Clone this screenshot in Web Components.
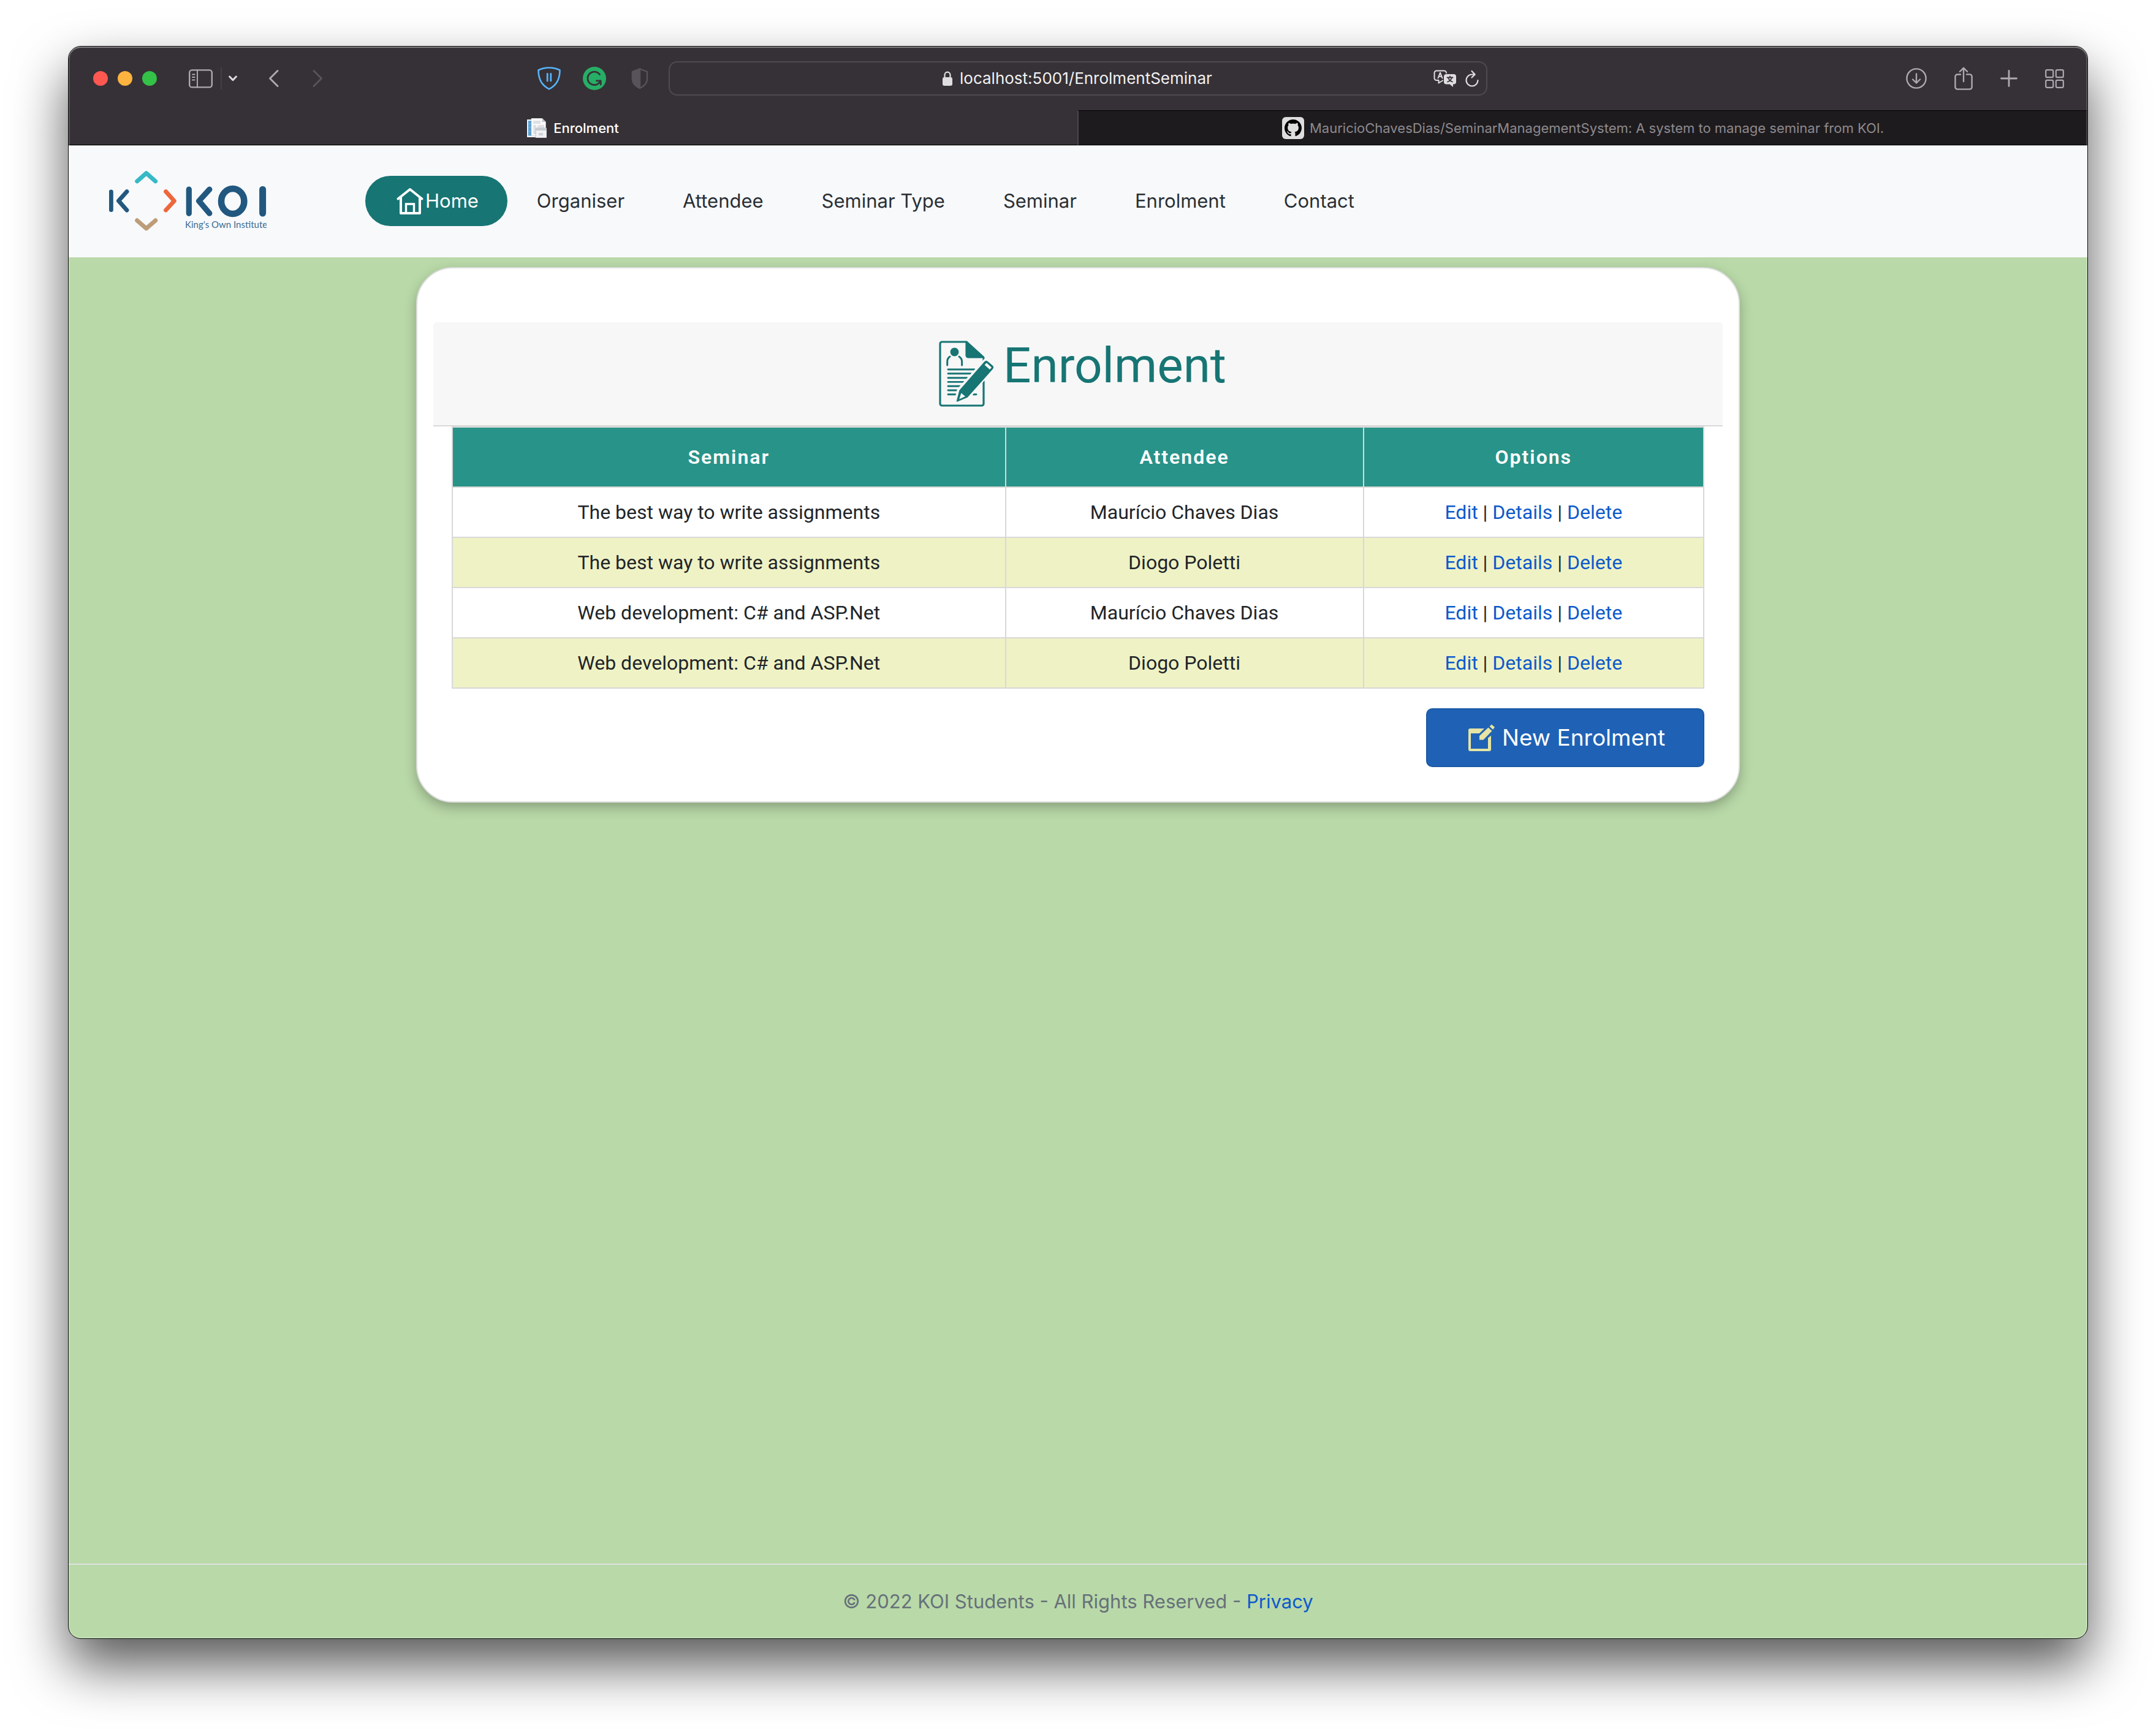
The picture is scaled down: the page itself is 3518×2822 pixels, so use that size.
<!DOCTYPE html>
<html lang="en">
<head>
<meta charset="utf-8">
<title>Enrolment</title>
<style>
html,body{margin:0;height:100%}
body{background:#fff;box-sizing:border-box;padding:75px 111px 147px;display:flex;font-family:Inter,"Liberation Sans",sans-serif}
</style>
</head>
<body>
<browser-window>
  <browser-toolbar slot="chrome" address="localhost:5001/EnrolmentSeminar"></browser-toolbar>
  <browser-tabs slot="chrome"></browser-tabs>
  <site-header></site-header>
  <site-main>
    <enrolment-card heading="Enrolment">
      <enrolment-table></enrolment-table>
      <new-button slot="action">New Enrolment</new-button>
    </enrolment-card>
  </site-main>
  <site-footer></site-footer>
</browser-window>
<script>
const define = (name, html, ready) => customElements.define(name, class extends HTMLElement {
  constructor() { super(); this.attachShadow({ mode: 'open' }).innerHTML = html; }
  connectedCallback() { if (ready) ready(this.shadowRoot, this); }
});

define('browser-window', `
<style>
:host{flex:1;display:flex;flex-direction:column;position:relative;border:1px solid #0b0b0b;border-radius:21px;overflow:hidden;background:#b9d9a8;box-shadow:0 44px 88px rgba(0,0,0,.66)}
:host::after{content:"";position:absolute;inset:0;border-radius:20px;pointer-events:none;box-shadow:inset 0 2px 0 rgba(255,255,255,.25),inset 0 0 0 2px rgba(255,255,255,.16)}
</style>
<slot name="chrome"></slot><slot></slot>`);

define('browser-toolbar', `
<style>
:host{display:grid;grid-template-columns:1fr auto 1fr;align-items:center;height:104px;padding:0 38px;box-sizing:border-box;color:#aea9b0;background:#363136}
button{all:unset;display:flex;cursor:pointer}
svg{display:block;fill:none;stroke:currentColor;stroke-linecap:round;stroke-linejoin:round}
.lights{display:flex;gap:16px;margin-left:2px}
.lights button{width:24px;height:24px;border-radius:50%}
.red{background:#fe5850}.amber{background:#fdb33f}.green{background:#33c148}
.side{margin-left:52px;display:flex;align-items:center}
.side i{width:2px;height:36px;background:#454046;margin:0 11px 0 13px}
.navs{display:flex;gap:51px;margin-left:50px}
.dim{color:#58535a}
.left,.right{display:flex;align-items:center}
.ext{display:flex;align-items:center;gap:36px;margin-left:auto;margin-right:28px}
.right{justify-content:flex-end;gap:45px}
form{width:1336px;height:56px;box-sizing:border-box;border:2px solid #4e4a50;border-radius:14px;display:grid;grid-template-columns:1fr auto 1fr;align-items:center;color:#dfdddf;padding:0 12px}
label{grid-column:2;display:flex;align-items:center;gap:12px}
input{all:unset;width:414px;color:#f1f0f1;font:400 26px/32px Inter,"Liberation Sans",sans-serif}
.tools{display:flex;gap:14px;align-items:center;justify-content:flex-end}
</style>
<div class="left">
<div class="lights"><button class="red" aria-label="Close"></button><button class="amber" aria-label="Minimise"></button><button class="green" aria-label="Zoom"></button></div>
<div class="side">
<button aria-label="Sidebar"><svg width="39" height="31" viewBox="0 0 39 31" stroke-width="2.4"><rect x="1.2" y="1.4" width="36.6" height="28" rx="4"/><path d="M14 1.4v28M6 8.500h3.600M6 13h3.600M6 17.500h3.600" stroke-width="2"/></svg></button>
<i></i>
<button aria-label="Tab groups"><svg width="14" height="10" viewBox="0 0 14 10" stroke-width="3" style="stroke:#dcdadd"><path d="M1.600 2 7 7.600 12.400 2"/></svg></button>
</div>
<div class="navs">
<button aria-label="Back"><svg width="20" height="30" viewBox="0 0 20 30" stroke-width="3"><path d="M16 2.500 3.500 15 16 27.500"/></svg></button>
<button aria-label="Forward" class="dim"><svg width="20" height="30" viewBox="0 0 20 30" stroke-width="3"><path d="M4 2.500 16.500 15 4 27.500"/></svg></button>
</div>
<div class="ext">
<button aria-label="Ad blocker"><svg width="38" height="38" viewBox="0 0 38 38" style="stroke:#56b4fb" stroke-width="2.600"><path d="M19 1.500c6 0 12 1.200 17.500 4C36.500 19 32 30 19 36.300 6 30 1.500 19 1.500 5.500 7 2.700 13 1.500 19 1.500z"/><path d="M16.200 11.500v11.500M21.800 11.500v11.500" stroke-width="2.800"/></svg></button>
<button aria-label="Writing assistant"><svg width="38" height="38" viewBox="0 0 38 38" style="stroke:#363136" stroke-width="2.800"><circle cx="19" cy="19" r="19" fill="#27ae66" stroke="none"/><path d="M27.500 12.500A10.800 10.800 0 1 0 28.500 23.500M22.500 22.800h6.700v6.200"/></svg></button>
<button aria-label="Privacy report" class="dim"><svg width="38" height="38" viewBox="0 0 38 38" stroke-width="2.400"><path d="M19 3.500l12 4.500v12c0 7-6 12-12 15C13 32 7 27 7 20V8z"/><path d="M19 3.500L7 8v12c0 7 6 12 12 15z" fill="currentColor"/></svg></button>
</div>
</div>
<form>
<label><svg width="16" height="24" viewBox="0 0 16 24" stroke-width="2.200"><rect x="0" y="10" width="16" height="14" rx="3" fill="currentColor" stroke="none"/><path d="M3.500 11V6.500a4.500 4.800 0 0 1 9 0V11"/></svg><input type="text" aria-label="Address"></label>
<div class="tools">
<button type="button" aria-label="Translate"><svg width="38" height="28" viewBox="0 0 38 28" stroke-width="2"><path d="M15 17.500 8.500 21.500V17H5A3.500 3.500 0 0 1 1.500 13.500V5A3.500 3.500 0 0 1 5 1.500h12.500A3.500 3.500 0 0 1 21 5M7.500 13.500 11 4.500l3.500 9M8.600 10.800h4.800"/><path d="M21 7h12a4 4 0 0 1 4 4v8.500a4 4 0 0 1-4 4h-1V28l-5.500-4.500H21a4 4 0 0 1-4-4V11a4 4 0 0 1 4-4z" fill="currentColor" stroke="none"/><path d="M22.500 12.500h9M27 10.300v2M30 12.500c-1 3.500-3.500 6-7 7M24 12.500c1 3.500 3.500 6 7 7" stroke-width="1.800" style="stroke:#363136"/></svg></button>
<button type="button" aria-label="Reload"><svg width="22" height="28" viewBox="0 0 22 28" stroke-width="2.200"><path d="M15.500 7.500H11A9.500 9.500 0 1 0 20.500 17M10.500 2l5.200 5.400-5.200 5.100"/></svg></button>
</div>
</form>
<div class="right">
<button aria-label="Downloads"><svg width="34" height="34" viewBox="0 0 34 34" stroke-width="2.400"><circle cx="17" cy="17" r="15.600"/><path d="M17 9.500v15M11 18.500l6 6 6-6"/></svg></button>
<button aria-label="Share"><svg width="30" height="38" viewBox="0 0 30 38" stroke-width="2.400"><path d="M10 12.500H5a3.600 3.600 0 0 0-3.600 3.600v17A3.600 3.600 0 0 0 5 36.600h20a3.600 3.600 0 0 0 3.600-3.600V16a3.600 3.600 0 0 0-3.600-3.600h-5M15 24V2M8.800 8 15 1.800 21.200 8"/></svg></button>
<button aria-label="New tab"><svg width="28" height="28" viewBox="0 0 28 28" stroke-width="2.800"><path d="M14 1.500v25M1.500 14h25"/></svg></button>
<button aria-label="Tab overview"><svg width="31" height="31" viewBox="0 0 31 31" stroke-width="2.200"><rect x="1.200" y="1.200" width="12" height="12" rx="2"/><rect x="17.800" y="1.200" width="12" height="12" rx="2"/><rect x="1.200" y="17.800" width="12" height="12" rx="2"/><rect x="17.800" y="17.800" width="12" height="12" rx="2"/></svg></button>
</div>
`, (root, host) => { root.querySelector('input').value = host.getAttribute('address'); });

define('browser-tabs', `
<style>
:host{display:flex;height:58px;box-sizing:border-box;background:#363136;border-bottom:1px solid #b9babb;font-size:22px;line-height:28px}
button{all:unset;box-sizing:content-box;flex:1 1 0;display:flex;align-items:center;justify-content:center;border-bottom:1px solid #000;cursor:pointer;white-space:nowrap}
.on{color:#fff;font-weight:500;gap:11px;border-top:1px solid transparent}
.off{color:#8d8a8e;background:#1e1b1e;border-top:1px solid #000;border-left:2px solid #4a464b;gap:9px}
svg{display:block}
</style>
<button class="on"><svg width="32" height="32" viewBox="0 0 32 32"><path d="M0 2h20v29H0z" fill="#f4f6f8"/><path d="M2 4h8v24.500H2z" fill="#4a97cf"/><path d="M4.500 4v24.500M2 9h6M2 15h6M2 21h6" stroke="#7db7e0" stroke-width=".8"/><path d="M7 0h17.500l6 6v22.600H7z" fill="#fbfbfb" stroke="#c9ccd0" stroke-width=".6"/><path d="M24.500 0v6h6z" fill="#c3c5c9"/><path d="M10 4h12v5H10zM10 11h5v15h-5zM17 11h11v6H17z" fill="#dfe1e6"/><path d="M14 16h18v16H14z" fill="#f0f1f4" stroke="#b5b8be" stroke-width=".8"/><path d="M14 16h18v4H14z" fill="#c8cbd0"/><path d="M19 24h7v4h-7z" fill="#d0d3d8"/></svg><span>Enrolment</span></button>
<button class="off"><svg width="36" height="36" viewBox="0 0 36 36"><rect width="36" height="36" rx="6" fill="#dedede"/><path transform="translate(4 4) scale(1.75)" d="M8 0C3.580 0 0 3.580 0 8c0 3.540 2.290 6.530 5.470 7.590.4.070.55-.17.55-.38 0-.19-.01-.82-.01-1.490-2.010.37-2.530-.49-2.690-.94-.09-.23-.48-.94-.82-1.130-.28-.15-.68-.52-.01-.53.63-.01 1.080.58 1.230.82.72 1.210 1.870.87 2.330.66.07-.52.28-.87.51-1.070-1.780-.2-3.640-.89-3.640-3.950 0-.87.31-1.590.82-2.150-.08-.2-.36-1.020.08-2.120 0 0 .67-.21 2.200.82.64-.18 1.320-.27 2-.27s1.360.09 2 .27c1.530-1.040 2.200-.82 2.200-.82.44 1.100.16 1.920.08 2.120.51.56.82 1.270.82 2.150 0 3.070-1.870 3.750-3.650 3.950.29.25.54.73.54 1.480 0 1.070-.01 1.930-.01 2.200 0 .21.15.46.55.38A8.010 8.010 0 0 0 16 8c0-4.420-3.580-8-8-8z"/></svg><span>MauricioChavesDias/SeminarManagementSystem: A system to manage seminar from KOI.</span></button>`);

define('koi-logo', `
<style>:host{display:block}svg{display:block;fill:none;stroke:#22587f;stroke-linecap:round;stroke-linejoin:round}text{font:15px Lato,sans-serif;fill:#3c6c91;stroke:none}</style>
<svg width="257" height="100" viewBox="18 18 257 100" role="img" aria-label="KOI King's Own Institute">
<g stroke-width="7"><path d="M21.300 53v29.500M46.900 52.700 33.500 67.800 46.900 83"/><path d="M63.700 35.800 78.700 22.700 93.700 35.800" style="stroke:#35b9c6"/><path d="M63.700 99.800 78.700 112.900 93.700 99.800" style="stroke:#bd9d79"/><path d="M110.600 52.700 124.300 68 110.600 83" style="stroke:#ee673c"/></g>
<path d="M148.300 49v39.300M181.800 49.200 164.600 68 181.800 88.200" stroke-width="9.200"/>
<ellipse cx="219.700" cy="68.500" rx="18.700" ry="20.500" stroke-width="10.600"/>
<path d="M268.600 49.200v38.900" stroke-width="11"/>
<text x="142" y="112">King's Own Institute</text>
</svg>`);

define('site-header', `
<style>
:host{display:flex;align-items:center;height:182px;box-sizing:border-box;padding:0 66px 2px;background:#f7f9fb}
nav{display:flex;margin-left:161px}
a{display:flex;align-items:center;gap:2px;padding:17px 47px 17px 48px;border-radius:41px;font-size:31px;line-height:48px;color:#2a2f34;text-decoration:none;white-space:nowrap}
a.on{background:#177574;color:#fff}
svg{display:block}
</style>
<koi-logo></koi-logo>
<nav><a class="on" href="#"><svg width="48" height="48" viewBox="0 0 48 48" fill="none" stroke="#fff" stroke-width="4" stroke-linejoin="round" stroke-linecap="round"><path d="M5.500 20.500 25 5l19.500 15.500M10 18v26h31V18"/><path d="M18.500 43V29h13v14" stroke-width="3.400" stroke-linejoin="miter"/></svg><span>Home</span></a><a href="#">Organiser</a><a href="#">Attendee</a><a href="#">Seminar Type</a><a href="#">Seminar</a><a href="#">Enrolment</a><a href="#">Contact</a></nav>`);

define('site-main', `
<style>:host{flex:1;display:block;padding:16px}</style><slot></slot>`);

define('enrolment-card', `
<style>
:host{display:block;box-sizing:border-box;max-width:2160px;margin:0 auto;padding:88px 26px 56px;background:#fff;border:2px solid #dcdddc;border-radius:60px;box-shadow:0 8px 20px rgba(0,0,0,.26)}
header{display:flex;justify-content:center;align-items:flex-start;padding:24px;background:#f7f7f7;border-bottom:2px solid #d8d8d8;border-radius:6px 6px 0 0;color:#177574}
svg{display:block}
h1{margin:0;font:400 80px/94px Roboto,sans-serif}
.body{padding:0 30px;display:flex;flex-direction:column;gap:32px}
::slotted([slot=action]){align-self:flex-end}
</style>
<header>
<svg width="120" height="120" viewBox="0 0 120 120" fill="none" stroke="currentColor" stroke-width="3.200" stroke-linecap="round" stroke-linejoin="round">
<path d="M59 8H20a3 3 0 0 0-3 3v98a3 3 0 0 0 3 3h65a3 3 0 0 0 3-3V72M88 34v6"/>
<path d="M60 8v22a3 3 0 0 0 3 3h24.500z" fill="currentColor"/>
<circle cx="40.500" cy="24.500" r="6.900" fill="currentColor" stroke="none"/>
<path d="M33 32c-3 2-4.300 4.500-4.300 8v6M48 32c3 2 4.600 4.500 4.600 8v6" stroke-width="3"/>
<path d="M30 53h43M30 59.800h37M30 66.700h31M30 73.400h26M30 80.200h20M30 87h14M30 93.800h12M71 93.800h5" stroke-width="2.900"/>
<path d="M44 105.500 48.500 87 92 38.500 103 48.500 61.500 98.500z" fill="#f7f7f7" stroke="#f7f7f7" stroke-width="8"/>
<path d="M45 104.500 49.500 87.500 90 41.200a3 3 0 0 1 4.200-.3l7.600 6.600a3 3 0 0 1 .2 4.200L61 97.700z" fill="currentColor" stroke-width="2.400"/>
<path d="M92.800 42.300 101 49.800 98 53 89.600 45.800z" fill="#f7f7f7" stroke="none"/>
<path d="M51.500 91.500 58 97 48.200 101.500z" fill="#f7f7f7" stroke="none"/>
</svg>
<h1></h1>
</header>
<div class="body"><slot></slot><slot name="action"></slot></div>`,
(root, host) => { root.querySelector('h1').textContent = host.getAttribute('heading'); });

define('enrolment-table', `
<style>
:host{display:block}
table{width:100%;table-layout:fixed;border-collapse:collapse;font:400 32px/48px Roboto,sans-serif;color:#212529;text-align:center}
th,td{border:2px solid #d8d8d8;padding:16px}
th{padding:24px 16px;background:#289389;color:#fff;font-weight:600;letter-spacing:2px}
tbody tr:nth-child(even){background:#eff2c5}
a{color:#0d5acb;text-decoration:none}
.s{width:44.2%}.a{width:28.6%}
</style>
<table><colgroup><col class="s"><col class="a"><col></colgroup>
<thead><tr><th>Seminar</th><th>Attendee</th><th>Options</th></tr></thead><tbody></tbody></table>`,
root => {
  const rows = [
    ['The best way to write assignments', 'Maurício Chaves Dias'],
    ['The best way to write assignments', 'Diogo Poletti'],
    ['Web development: C# and ASP.Net', 'Maurício Chaves Dias'],
    ['Web development: C# and ASP.Net', 'Diogo Poletti']
  ];
  root.querySelector('tbody').innerHTML = rows.map(([s, a]) =>
    `<tr><td>${s}</td><td>${a}</td><td><a href="#">Edit</a> | <a href="#">Details</a> | <a href="#">Delete</a></td></tr>`).join('');
});

define('new-button', `
<style>
:host{display:block}
button{display:flex;align-items:center;gap:10px;height:96px;margin:0;padding:0 62px 0 64px;border:2px solid #1b59a5;border-radius:10px;background:#1f62b5;color:#fff;font:400 37px/56px Inter,"Liberation Sans",sans-serif;cursor:pointer}
svg{display:block;fill:#e6e4a3}
</style>
<button type="button"><svg width="48" height="48" viewBox="0 0 48 48"><path d="M6 9h23l-8 8H7v25h28V24.500l5-4V43a3 3 0 0 1-3 3H6a3 3 0 0 1-3-3V12a3 3 0 0 1 3-3z"/><path d="M21 21 35.500 7.500 41.500 13 27.500 27.500H21zM37.500 5.500 41 2.500l5 4.500-3 3.800z"/></svg><slot></slot></button>`);

define('site-footer', `
<style>
:host{display:block;border-top:2px solid #dbe1e1;text-align:center;font-size:31px;line-height:120px;color:#66717a}
a{color:#0d5acb;text-decoration:none}
</style>© 2022 KOI Students - All Rights Reserved - <a href="#">Privacy</a>`);
</script>
</body>
</html>
